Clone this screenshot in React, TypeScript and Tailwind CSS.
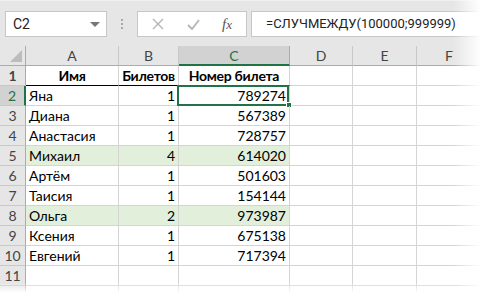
import React from "react";

const rows: [string, number, number, boolean][] = [
  ["Яна", 1, 789274, false],
  ["Диана", 1, 567389, false],
  ["Анастасия", 1, 728757, false],
  ["Михаил", 4, 614020, true],
  ["Артём", 1, 501603, false],
  ["Таисия", 1, 154144, false],
  ["Ольга", 2, 973987, true],
  ["Ксения", 1, 675138, false],
  ["Евгений", 1, 717394, false],
];

const cellFont = { fontFamily: "Lato, 'Liberation Sans', sans-serif" };

function RowHeader({ n, selected }: { n?: number; selected?: boolean }) {
  return (
    <div
      className={
        "w-[26px] h-5 shrink-0 flex items-center justify-center text-[14px] border-b border-[#c8c8c8] " +
        (selected
          ? "bg-[#d2d2d2] text-[#217346] border-r-2 border-r-[#217346]"
          : "bg-[#e6e6e6] text-[#444] border-r border-r-[#ababab]")
      }
    >
      {n}
    </div>
  );
}

function EmptyCells() {
  return (
    <>
      <div className="w-[63px] h-5 shrink-0 border-r border-b border-[#d4d4d4]" />
      <div className="w-[64px] h-5 shrink-0 border-r border-b border-[#d4d4d4]" />
      <div className="flex-1 h-5 border-b border-[#d4d4d4]" />
    </>
  );
}

export default function App() {
  return (
    <div className="relative w-[481px] h-[293px] overflow-hidden bg-white text-black" style={cellFont}>
      {/* formula bar */}
      <div className="h-[46px] bg-[#e6e6e6] border-t border-[#f0f0f0] flex items-start pt-[10px]">
        <div className="ml-[5px] w-[102px] h-[26px] bg-white border border-[#c6c6c6] flex items-center pl-[7px] pr-[6px]">
          <span className="text-[14px] text-[#222]" style={{ fontFamily: "Roboto, sans-serif" }}>
            C2
          </span>
          <span className="ml-auto w-0 h-0 border-l-[5px] border-r-[5px] border-t-[5px] border-l-transparent border-r-transparent border-t-[#777]" />
        </div>
        <div className="w-[30px] h-[26px] flex flex-col items-center justify-center gap-[2px]">
          <span className="w-[2px] h-[2px] bg-[#a8a8a8]" />
          <span className="w-[2px] h-[2px] bg-[#a8a8a8]" />
          <span className="w-[2px] h-[2px] bg-[#a8a8a8]" />
        </div>
        <div className="w-[110px] h-[26px] bg-white border border-[#c6c6c6] flex items-center">
          <svg width="12" height="12" viewBox="0 0 12 12" className="ml-[14px]">
            <path d="M1 1 L11 11 M11 1 L1 11" stroke="#b4b4b4" strokeWidth="1.4" />
          </svg>
          <svg width="13" height="11" viewBox="0 0 13 11" className="ml-[23px]">
            <path d="M1 6 L5 10 L12 1" stroke="#b4b4b4" strokeWidth="1.8" fill="none" />
          </svg>
          <span
            className="ml-[22px] italic text-[15px] text-[#555]"
            style={{ fontFamily: "'Liberation Serif', serif" }}
          >
            f<span className="text-[13px]">x</span>
          </span>
        </div>
        <div className="ml-[4px] flex-1 h-[26px] bg-white border border-[#c6c6c6] flex items-center pl-[14px]">
          <span className="text-[13px] text-[#222]" style={{ fontFamily: "Roboto, sans-serif" }}>
            =СЛУЧМЕЖДУ(100000;999999)
          </span>
        </div>
      </div>

      {/* column headers */}
      <div className="flex h-5 bg-[#e6e6e6] text-[14px] text-[#444]">
        <div className="w-[26px] h-5 shrink-0 border-r border-b border-[#ababab] relative">
          <svg width="12" height="12" viewBox="0 0 12 12" className="absolute right-[3px] bottom-[3px]">
            <path d="M12 0 L12 12 L0 12 Z" fill="#bcbcbc" />
          </svg>
        </div>
        <div className="w-[93px] h-5 shrink-0 border-r border-[#c8c8c8] border-b border-b-[#ababab] flex items-center justify-center">A</div>
        <div className="w-[60px] h-5 shrink-0 border-r border-[#c8c8c8] border-b border-b-[#ababab] flex items-center justify-center">B</div>
        <div className="w-[111px] h-5 shrink-0 bg-[#d2d2d2] text-[#217346] border-r border-[#ababab] border-b-2 border-b-[#217346] flex items-center justify-center">C</div>
        <div className="w-[63px] h-5 shrink-0 border-r border-[#c8c8c8] border-b border-b-[#ababab] flex items-center justify-center">D</div>
        <div className="w-[64px] h-5 shrink-0 border-r border-[#c8c8c8] border-b border-b-[#ababab] flex items-center justify-center">E</div>
        <div className="flex-1 h-5 border-b border-[#ababab] flex items-center justify-center">F</div>
      </div>

      {/* row 1 */}
      <div className="flex text-[14px] font-bold tracking-[-0.3px]">
        <RowHeader n={1} />
        <div className="w-[93px] h-5 shrink-0 border-r border-[#d4d4d4] border-b border-b-black flex items-center justify-center">Имя</div>
        <div className="w-[60px] h-5 shrink-0 border-r border-[#d4d4d4] border-b border-b-black flex items-center justify-center">Билетов</div>
        <div className="w-[111px] h-5 shrink-0 border-r border-[#d4d4d4] border-b border-b-black flex items-center justify-center">Номер билета</div>
        <EmptyCells />
      </div>

      {rows.map(([name, count, ticket, green], i) => (
        <div key={name} className="flex text-[14px]">
          <RowHeader n={i + 2} selected={i === 0} />
          <div
            className={
              "w-[93px] h-5 shrink-0 border-r border-b border-[#d4d4d4] flex items-center pl-[3px] " +
              (green ? "bg-[#e2efda]" : "")
            }
          >
            {name}
          </div>
          <div
            className={
              "w-[60px] h-5 shrink-0 border-r border-b border-[#d4d4d4] flex items-center justify-end pr-[3px] " +
              (green ? "bg-[#e2efda]" : "")
            }
          >
            {count}
          </div>
          <div
            className={
              "relative w-[111px] h-5 shrink-0 border-r border-b border-[#d4d4d4] flex items-center justify-end pr-[3px] " +
              (green ? "bg-[#e2efda]" : "")
            }
          >
            {ticket}
            {i === 0 && (
              <>
                <div className="absolute -left-[2px] -top-[1px] w-[112px] h-[21px] border-2 border-[#217346]" />
                <div className="absolute -right-[3px] -bottom-[3px] w-[6px] h-[6px] bg-[#217346] border border-white" />
              </>
            )}
          </div>
          <EmptyCells />
        </div>
      ))}

      {/* row 11 and partial row */}
      <div className="flex text-[14px]">
        <RowHeader n={11} />
        <div className="w-[93px] h-5 shrink-0 border-r border-b border-[#d4d4d4]" />
        <div className="w-[60px] h-5 shrink-0 border-r border-b border-[#d4d4d4]" />
        <div className="w-[111px] h-5 shrink-0 border-r border-b border-[#d4d4d4]" />
        <EmptyCells />
      </div>
      <div className="flex">
        <RowHeader />
        <div className="w-[93px] h-5 shrink-0 border-r border-b border-[#d4d4d4]" />
        <div className="w-[60px] h-5 shrink-0 border-r border-b border-[#d4d4d4]" />
        <div className="w-[111px] h-5 shrink-0 border-r border-b border-[#d4d4d4]" />
        <EmptyCells />
      </div>

      {/* soft fade at right and bottom edges */}
      <div className="absolute top-0 right-0 w-[28px] h-full bg-gradient-to-r from-transparent to-white" />
      <div className="absolute left-0 bottom-0 w-full h-[10px] bg-gradient-to-b from-transparent to-white" />
    </div>
  );
}
